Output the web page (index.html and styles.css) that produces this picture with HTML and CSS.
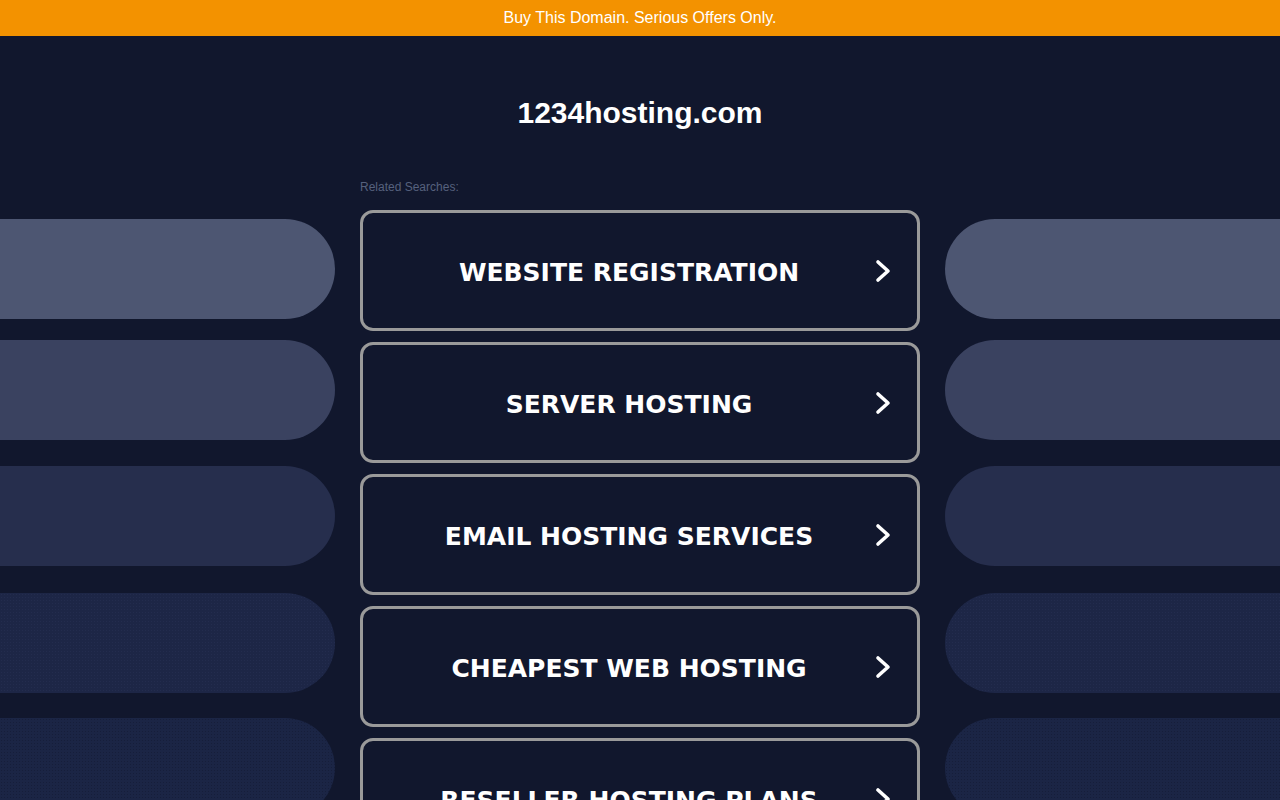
FILE: index.html
```html
<!DOCTYPE html>
<html>
<head>
<meta charset="utf-8">
<link rel="stylesheet" href="styles.css">
</head>
<body>
<div class="topbar">Buy This Domain. Serious Offers Only.</div>
<h1 class="title">1234hosting.com</h1>
<div class="main">
  <div class="side side-left">
    <div class="pill p1"></div>
    <div class="pill p2"></div>
    <div class="pill p3"></div>
    <div class="pill p4"></div>
    <div class="pill p5"></div>
  </div>
  <div class="center">
    <div class="label">Related Searches:</div>
    <a class="btn"><span class="btn-text">WEBSITE REGISTRATION</span><svg class="chev" viewBox="0 0 20 26"><path d="M5 4 L15 13 L5 22"/></svg></a>
    <a class="btn"><span class="btn-text">SERVER HOSTING</span><svg class="chev" viewBox="0 0 20 26"><path d="M5 4 L15 13 L5 22"/></svg></a>
    <a class="btn"><span class="btn-text">EMAIL HOSTING SERVICES</span><svg class="chev" viewBox="0 0 20 26"><path d="M5 4 L15 13 L5 22"/></svg></a>
    <a class="btn"><span class="btn-text">CHEAPEST WEB HOSTING</span><svg class="chev" viewBox="0 0 20 26"><path d="M5 4 L15 13 L5 22"/></svg></a>
    <a class="btn"><span class="btn-text">RESELLER HOSTING PLANS</span><svg class="chev" viewBox="0 0 20 26"><path d="M5 4 L15 13 L5 22"/></svg></a>
  </div>
  <div class="side side-right">
    <div class="pill p1"></div>
    <div class="pill p2"></div>
    <div class="pill p3"></div>
    <div class="pill p4"></div>
    <div class="pill p5"></div>
  </div>
</div>
</body>
</html>
```
FILE: styles.css
```css
html, body {
  margin: 0;
  padding: 0;
  background: #11172d;
  height: 800px;
  overflow: hidden;
}
body {
  font-family: "Liberation Sans", Arial, sans-serif;
  color: #fff;
}
.topbar {
  height: 36px;
  line-height: 35px;
  background: #f39200;
  color: #fff;
  text-align: center;
  font-size: 16px;
}
.title {
  margin: 0;
  padding-top: 60px;
  font-size: 30px;
  line-height: 34px;
  font-weight: bold;
  text-align: center;
  box-sizing: border-box;
  height: 144px;
}
.main {
  display: flex;
  column-gap: 25px;
}
.side {
  flex: 1;
  padding-top: 39px;
  display: flex;
  flex-direction: column;
}
.pill {
  height: 100px;
  flex: none;
}
.side-left .pill { border-radius: 0 50px 50px 0; }
.side-right .pill { border-radius: 50px 0 0 50px; }
.pill + .pill { margin-top: 21px; }
.pill.p3 { margin-top: 26px; }
.pill.p4 { margin-top: 27px; }
.pill.p5 { margin-top: 25px; }
.p1 { background: #4d5672; }
.p2 { background: #3a4260; }
.p3 { background: #262e4d; }
.p4 {
  background-color: #1d2646;
  background-image: radial-gradient(circle, rgba(60,75,120,0.18) 0.6px, transparent 0.8px);
  background-size: 3px 3px;
}
.p5 {
  background-color: #1b2545;
  background-image: radial-gradient(circle, rgba(10,15,35,0.3) 0.6px, transparent 0.9px);
  background-size: 3px 3px;
}
.center {
  width: 560px;
  flex: none;
  display: flex;
  flex-direction: column;
}
.label {
  font-size: 12px;
  line-height: 14px;
  color: #56617d;
  margin-top: 0;
  margin-bottom: 16px;
}
.btn {
  box-sizing: border-box;
  height: 121px;
  border: 3px solid #9a9a9a;
  border-radius: 13px;
  margin-bottom: 11px;
  display: flex;
  align-items: center;
  padding: 4px 24px 0 22px;
  flex: none;
}
.btn-text {
  flex: 1;
  text-align: center;
  font-family: "DejaVu Sans", Verdana, sans-serif;
  font-weight: bold;
  font-size: 25px;
  letter-spacing: 0;
  color: #fff;
}
.chev {
  width: 20px;
  height: 26px;
  flex: none;
  margin-top: -4px;
}
.chev path {
  fill: none;
  stroke: #fff;
  stroke-width: 3.6;
  stroke-linecap: round;
  stroke-linejoin: round;
}
```
